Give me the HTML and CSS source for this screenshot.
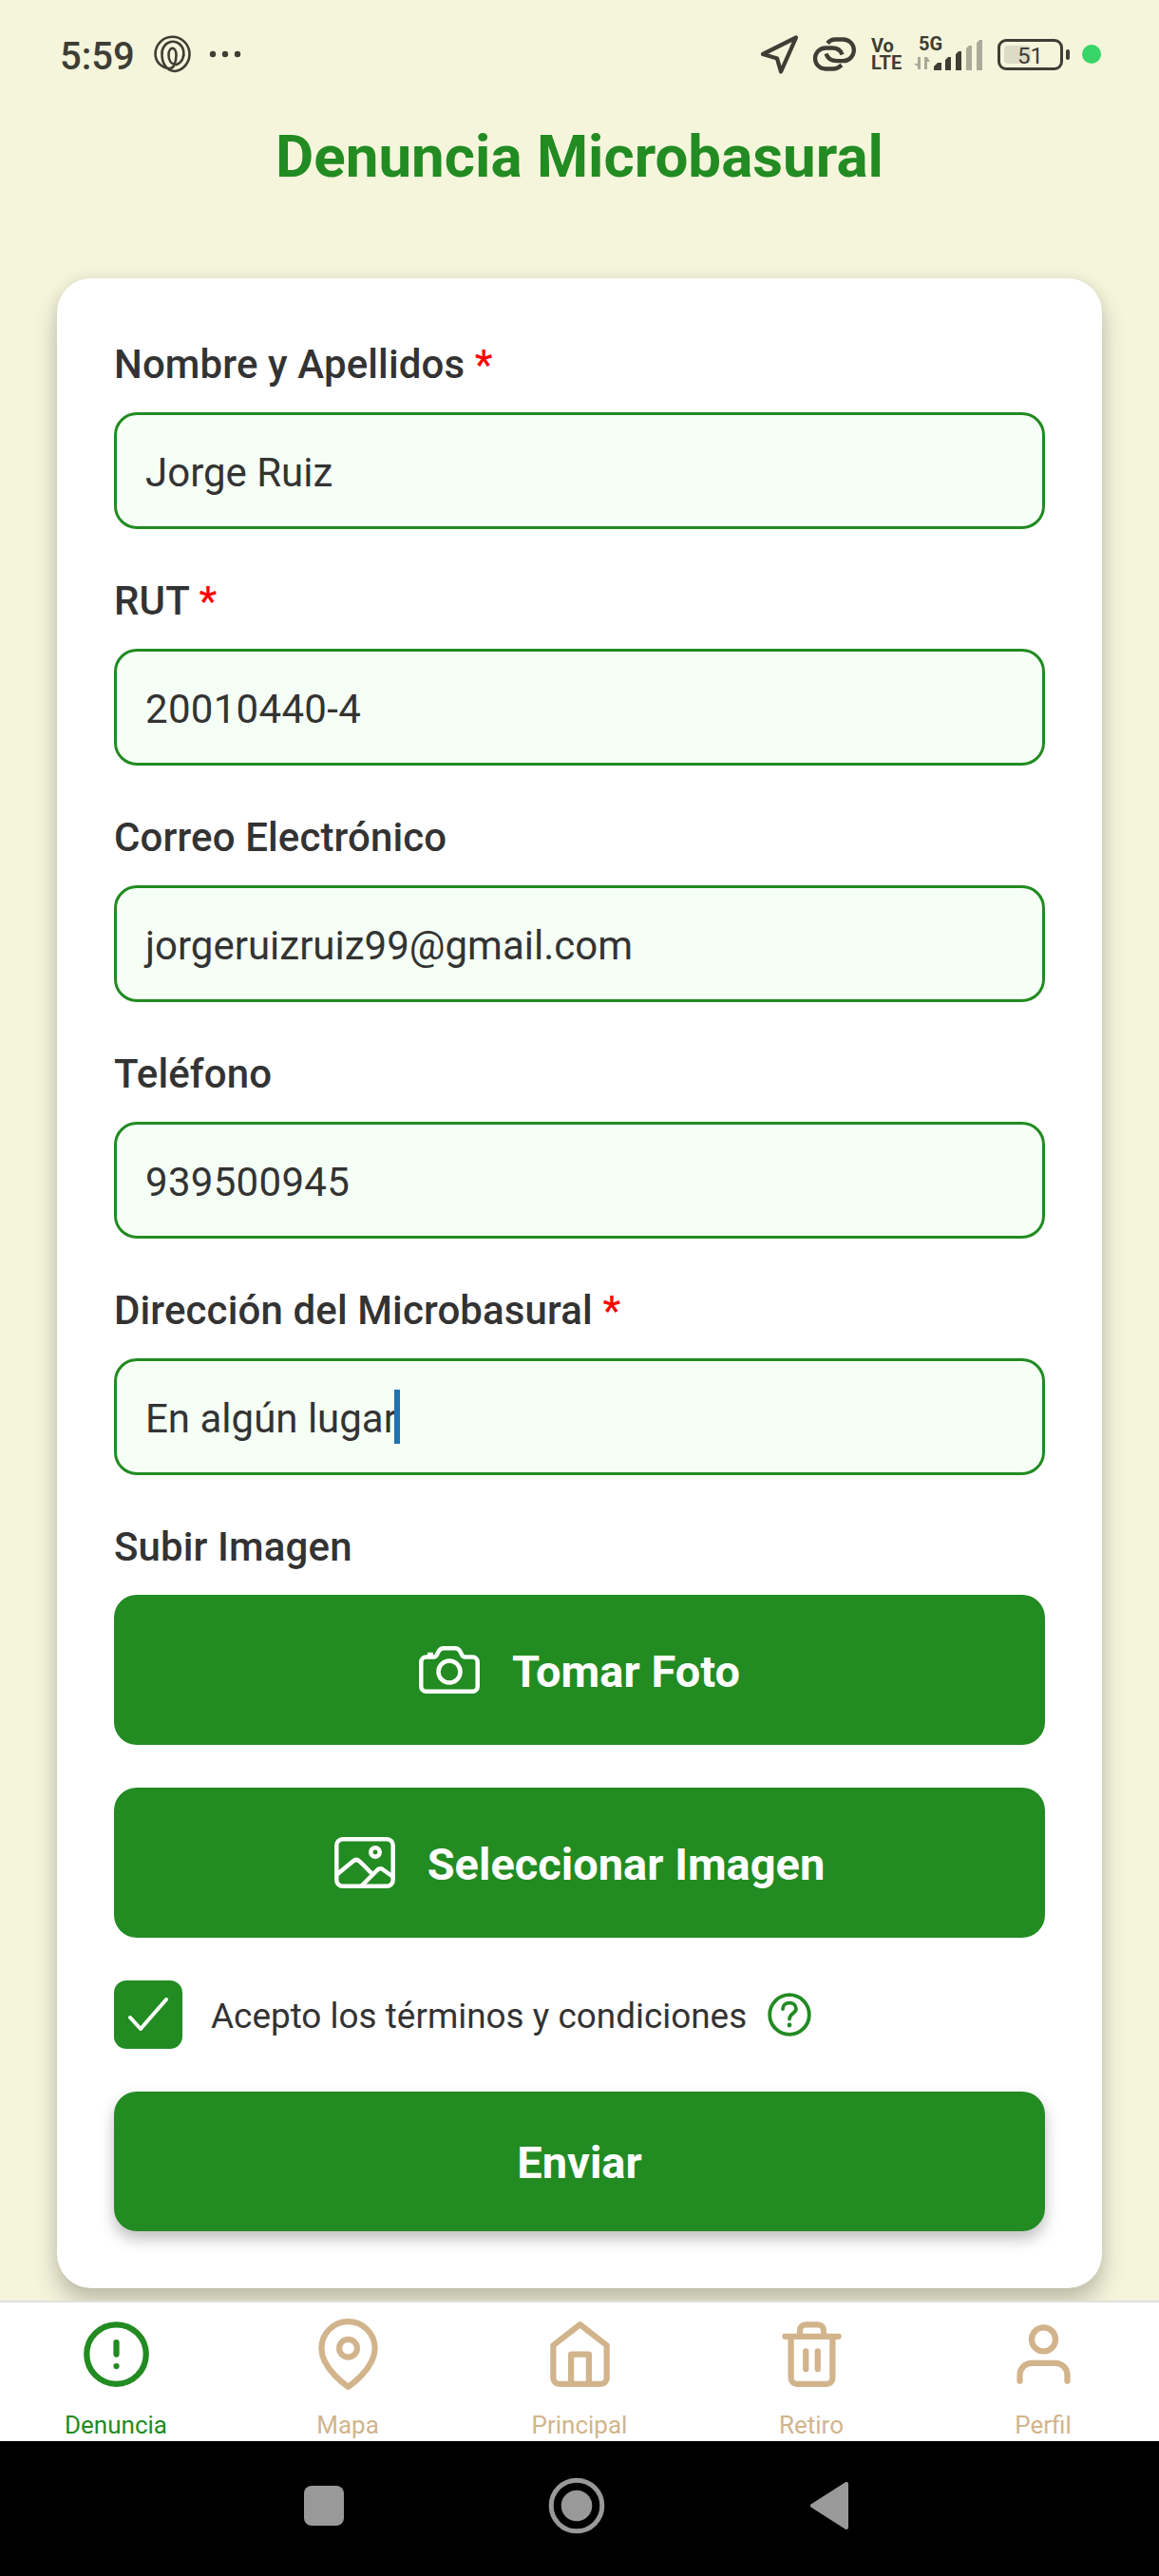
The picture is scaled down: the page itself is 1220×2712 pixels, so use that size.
FILE: index.html
```html
<!DOCTYPE html>
<html lang="es">
<head>
<meta charset="utf-8">
<title>Denuncia Microbasural</title>
<link rel="stylesheet" href="styles.css">
</head>
<body>
<div class="screen">
  <header class="status">
    <span class="clock">5:59</span>
    <svg class="spiral" width="40" height="40" viewBox="0 0 40 40" fill="none" stroke="#3e3e35" stroke-width="2.6" stroke-linecap="round"><path d="M17 35C8 35 1.500 28 1.500 19.500A18 18.200 0 1 1 22 38C14 38 8.500 30 8.500 20.500A11.500 12.500 0 1 1 24 31C18 31 15.500 26 15.500 21C15.500 11.500 23.500 11.500 23.500 21C23.500 28 21 35 17 35"/></svg>
    <svg class="dots" width="34" height="8" viewBox="0 0 34 8" fill="#3e3e35"><circle cx="4" cy="4" r="3.200"/><circle cx="17" cy="4" r="3.200"/><circle cx="30" cy="4" r="3.200"/></svg>
    <svg class="send" width="42" height="42" viewBox="0 0 42 42" fill="none" stroke="#3e3e35" stroke-width="4.300" stroke-linejoin="round"><path d="M38 2.500L3 20L18 24.500L22 38.500Z"/></svg>
    <svg class="link" width="48" height="36" viewBox="0 0 48 36" fill="none" stroke="#3e3e35" stroke-width="4.300"><path d="M16 6.500C18.500 3.500 21 2.500 24 2.500H32.500A11.300 11.300 0 0 1 32.500 25.200H26C20 25.200 16 22 14.500 17.500"/><path d="M31.500 18.500C30 14 26 11.500 21 11.500H14A11 11 0 0 0 14 33.500H22C26 33.500 28 32 31 29.500"/></svg>
    <span class="volte"><b>Vo</b><b>LTE</b></span>
    <span class="signal">
      <svg width="72" height="36" viewBox="0 0 72 36"><g fill="#a9aa98"><path d="M7 21V34H4V31L0 28H4V21ZM11 34V21H14L17 26H14V34Z"/><path d="M55 12L58 9H61V35H55ZM66 6L69 3H72V35H66Z"/></g><g fill="#3e3e35"><path d="M21 31L25 27H29V35H21ZM33 24L36 21H39V35H33ZM44 18L47 15H50V35H44Z"/></g></svg>
      <b>5G</b>
    </span>
    <span class="battery"><span>51</span></span>
    <span class="live"></span>
  </header>
  <h1>Denuncia Microbasural</h1>
  <main class="card">
    <div class="field"><label>Nombre y Apellidos <i>*</i></label><div class="input">Jorge Ruiz</div></div>
    <div class="field"><label>RUT <i>*</i></label><div class="input digits">20010440-4</div></div>
    <div class="field"><label>Correo Electrónico</label><div class="input">jorgeruizruiz99@gmail.com</div></div>
    <div class="field"><label>Teléfono</label><div class="input digits">939500945</div></div>
    <div class="field"><label>Dirección del Microbasural <i>*</i></label><div class="input">En algún lugar<span class="caret"></span></div></div>
    <label>Subir Imagen</label>
    <button class="upload"><svg width="64" height="50" viewBox="0 0 64 50" fill="none" stroke="#fff" stroke-width="4.500" stroke-linejoin="round"><path d="M7.500 11.500H16C19 11.500 19 8 21 5C22.500 2.500 23.500 2.300 26 2.300H38C40.500 2.300 41.500 2.500 43 5C45 8 45 11.500 48 11.500H56.500A5.200 5.200 0 0 1 61.700 16.700V42.500A5.200 5.200 0 0 1 56.500 47.700H7.500A5.200 5.200 0 0 1 2.300 42.500V16.700A5.200 5.200 0 0 1 7.500 11.500Z"/><circle cx="32" cy="27" r="11.500"/><path d="M9 9H15"/></svg><span>Tomar Foto</span></button>
    <button class="upload"><svg width="64" height="54" viewBox="0 0 64 54" fill="none" stroke="#fff" stroke-width="4.500" stroke-linejoin="round"><rect x="2.300" y="2.300" width="59.400" height="49.400" rx="6.500"/><circle cx="43" cy="16" r="4.700"/><path d="M2 40L19 26Q23 22 27 26L39 38M28 52L44 36Q48 31 52 35L62 42"/></svg><span>Seleccionar Imagen</span></button>
    <div class="terms">
      <span class="check"><svg width="42" height="36" viewBox="0 0 42 36" fill="none" stroke="#fff" stroke-width="4" stroke-linecap="round" stroke-linejoin="round"><path d="M2 21L13 33L40 2"/></svg></span>
      <span class="text">Acepto los términos y condiciones</span>
      <svg class="help" width="46" height="46" viewBox="0 0 46 46" fill="none" stroke="#228b22" stroke-width="3.800" stroke-linecap="round"><circle cx="23" cy="23" r="20.800"/><path d="M16 17C16 8.500 30 8.500 30 17C30 21.500 23 21.500 23 27.500"/><circle cx="23" cy="34" r="2.400" fill="#228b22" stroke="none"/></svg>
    </div>
    <button class="submit"><span>Enviar</span></button>
  </main>
  <nav class="tabs">
    <a class="active"><svg viewBox="0 0 24 24"><circle cx="12" cy="12" r="10"/><path d="M12 8v4M12 16h.01"/></svg>Denuncia</a>
    <a><svg viewBox="0 0 24 24"><path d="M21 10c0 7-9 13-9 13s-9-6-9-13a9 9 0 0 1 18 0z"/><circle cx="12" cy="10" r="3"/></svg>Mapa</a>
    <a><svg viewBox="0 0 24 24"><path d="M3 9l9-7 9 7v11a2 2 0 0 1-2 2H5a2 2 0 0 1-2-2z"/><path d="M9 22V12h6v10"/></svg>Principal</a>
    <a><svg viewBox="0 0 24 24"><path d="M3 6h18M19 6v14a2 2 0 0 1-2 2H7a2 2 0 0 1-2-2V6m3 0V4a2 2 0 0 1 2-2h4a2 2 0 0 1 2 2v2M10 11v6M14 11v6"/></svg>Retiro</a>
    <a><svg viewBox="0 0 24 24"><path d="M20 21v-2a4 4 0 0 0-4-4H8a4 4 0 0 0-4 4v2"/><circle cx="12" cy="7" r="4"/></svg>Perfil</a>
  </nav>
  <footer class="sysnav">
    <svg width="42" height="42" viewBox="0 0 42 42"><rect width="42" height="42" rx="8" fill="#999"/></svg>
    <svg width="60" height="60" viewBox="0 0 60 60"><circle cx="30" cy="30" r="26.800" fill="none" stroke="#999" stroke-width="5"/><circle cx="30" cy="30" r="16.300" fill="#999"/></svg>
    <svg width="40" height="50" viewBox="0 0 40 50"><path d="M2 25L38 2V48Z" fill="#999" stroke="#999" stroke-width="4" stroke-linejoin="round"/></svg>
  </footer>
</div>
</body>
</html>
```
FILE: styles.css
```css
* { box-sizing: border-box; }
body { margin: 0; background: #f5f5dc; font-family: Roboto, "Liberation Sans", sans-serif; color: #333; }
.screen { width: 1220px; height: 2712px; display: flex; flex-direction: column; overflow: hidden; }
svg { display: block; flex: none; }

.status { height: 114px; padding-left: 63px; display: flex; align-items: center; color: #3e3e35; flex: none; }
.clock { font-size: 40px; font-weight: 500; line-height: 48px; width: 99px; margin-top: 5px; }
.spiral { margin-right: 18px; }
.dots { margin-right: 546px; }
.send { margin-top: 2px; margin-right: 13px; }
.link { margin-right: 14px; }
.volte { display: flex; flex-direction: column; width: 45px; font-size: 20px; line-height: 18px; }
.signal { position: relative; width: 72px; margin-right: 16px; }
.signal b { position: absolute; left: 5px; top: -4px; font-size: 20px; line-height: 22px; }
.battery { position: relative; width: 69px; height: 33px; border: 3px solid #3e3e35; border-radius: 9px; padding: 4px; margin-right: 20px; }
.battery::before { content: ""; display: block; width: 28px; height: 19px; border-radius: 4px; background: #dcdbc6; }
.battery::after { content: ""; position: absolute; right: -10px; top: 8px; width: 4px; height: 11px; border-radius: 2px; background: #3e3e35; }
.battery span { position: absolute; inset: 0; text-align: center; font-size: 24px; line-height: 30px; }
.live { width: 20px; height: 20px; border-radius: 50%; background: #37d468; }

h1 { margin: 16px 0 0; height: 163px; flex: none; text-align: center; font-size: 61.9px; line-height: 71px; font-weight: 700; color: #228b22; }

.card { margin: 0 60px; height: 2116px; flex: none; padding: 60px; background: #fff; border-radius: 36px; display: flex; flex-direction: column; box-shadow: 0 16px 26px rgba(0,0,0,.21), 0 0 16px rgba(0,0,0,.08); }
.field { margin-bottom: 45px; }
label { display: block; height: 81px; flex: none; font-size: 42px; line-height: 61px; font-weight: 500; letter-spacing: .12px; }
label i { font-style: normal; color: #f00; }
.input { height: 123px; border: 3px solid #228b22; border-radius: 24px; background: #f5fff5; padding: 3px 30px 0; display: flex; align-items: center; font-size: 42px; }
.digits { letter-spacing: .3px; }
.caret { width: 6px; height: 57px; margin: -3px 0 0 -3px; background: #1f74b1; }
button { font: 700 47px/56px Roboto, "Liberation Sans", sans-serif; color: #fff; background: #228b22; border: 0; border-radius: 24px; padding: 0; flex: none; display: flex; align-items: center; justify-content: center; }
button span { padding-top: 3px; }
.upload { height: 158px; margin-bottom: 45px; gap: 34px; }
.terms { display: flex; align-items: center; height: 72px; margin-bottom: 45px; font-size: 36.9px; flex: none; }
.text { padding-top: 3px; }
.check { width: 72px; height: 72px; border-radius: 13px; background: #228b22; display: flex; align-items: center; justify-content: center; margin-right: 30px; }
.help { margin-left: 22px; }
.submit { height: 147px; box-shadow: 0 8px 16px rgba(0,0,0,.26); }

.tabs { position: relative; margin-top: 13px; height: 148px; flex: none; background: #fff; border-top: 2px solid #dfdfdf; display: grid; grid-template-columns: repeat(5, 1fr); }
.tabs a { display: flex; flex-direction: column; align-items: center; gap: 22px; padding-top: 17px; color: #d2b48c; font-size: 26px; line-height: 30px; }
.tabs svg { width: 75px; height: 75px; fill: none; stroke: currentColor; stroke-width: 2; stroke-linecap: round; stroke-linejoin: round; }
.tabs .active { color: #228b22; }

.sysnav { position: relative; height: 142px; flex: none; background: #000; display: flex; align-items: center; padding: 0 0 6px 320px; }
.sysnav svg:nth-child(1) { margin-right: 215px; }
.sysnav svg:nth-child(2) { margin-right: 216px; }
```
